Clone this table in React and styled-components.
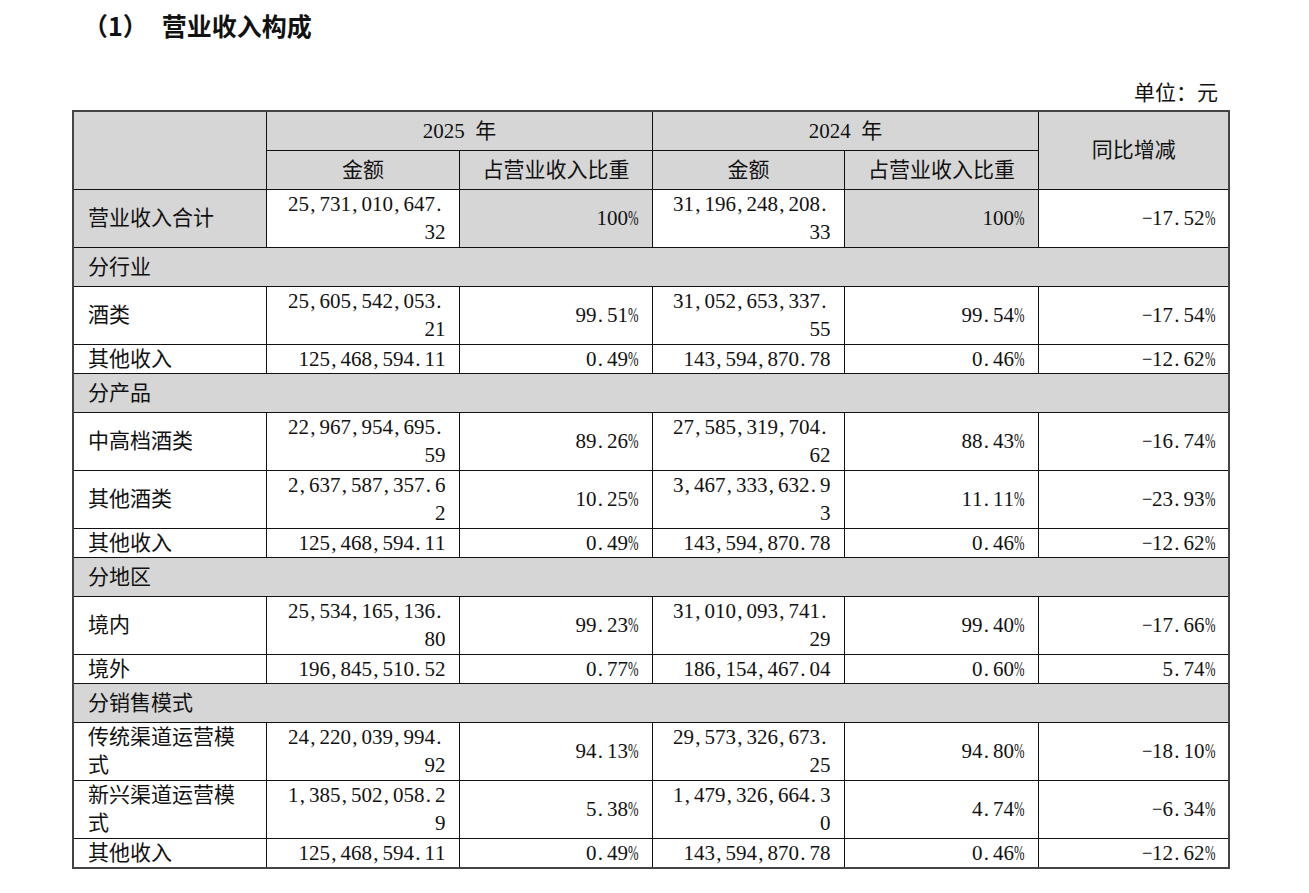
import React from "react";
import styled, { createGlobalStyle } from "styled-components";

const GlobalStyle = createGlobalStyle`
  body {
    margin: 0;
    background: #fff;
    color: #111;
    font-family: "Liberation Serif", "Noto Sans CJK SC", serif;
  }
`;

const Page = styled.div`
  width: 1156px;
  padding-left: 72px;
`;

const Title = styled.h2`
  margin: 0;
  padding-top: 8px;
  padding-left: 11px;
  display: flex;
  gap: 14px;
  font-family: "Noto Sans CJK SC", sans-serif;
  font-size: 25px;
  font-weight: 700;
  line-height: 34px;
`;

const Unit = styled.div`
  margin-top: 37px;
  padding-right: 10px;
  text-align: right;
  font-size: 21px;
  line-height: 28px;
`;

const Table = styled.table`
  margin-top: 3px;
  width: 1156px;
  table-layout: fixed;
  border-collapse: collapse;
  border: 2px solid #444;
  font-size: 21px;
  line-height: 28px;
`;

const Row = styled.tr`
  height: ${(p) => p.$h}px;
`;

const Cell = styled.td`
  padding: 0 13px 0 14px;
  border: 1px solid #111;
  vertical-align: middle;
  text-align: ${(p) => p.$align || "left"};
  background: ${(p) => (p.$gray ? "#d6d6d6" : "#fff")};
  white-space: nowrap;
`;

const Line = styled.div`
  display: block;
`;

// half-width box so latin chars take SimSun-like widths
const Ch = styled.span`
  display: inline-block;
  width: 0.5em;
  text-align: ${(p) => (p.$punct ? "left" : "center")};
  text-indent: ${(p) => (p.$punct ? "0.06em" : "0")};
  transform: ${(p) => (p.$squeeze ? `scaleX(${p.$squeeze})` : "none")};
  transform-origin: left center;
`;

const squeeze = { "%": 0.6, "−": 0.88 };

const Txt = ({ children }) => (
  <>
    {[...children].map((c, i) =>
      c.charCodeAt(0) < 128 || c === "−" ? (
        <Ch key={i} $punct={c === "," || c === "."} $squeeze={squeeze[c]}>
          {c === " " ? "\u00a0" : c}
        </Ch>
      ) : (
        c
      )
    )}
  </>
);

const Lines = ({ lines }) =>
  lines.map((l, i) => (
    <Line key={i}>
      <Txt>{l}</Txt>
    </Line>
  ));

const rows = [
  { total: true, label: ["营业收入合计"], a: ["25,731,010,647.", "32"], ap: "100%", b: ["31,196,248,208.", "33"], bp: "100%", yoy: "−17.52%" },
  { section: "分行业" },
  { label: ["酒类"], a: ["25,605,542,053.", "21"], ap: "99.51%", b: ["31,052,653,337.", "55"], bp: "99.54%", yoy: "−17.54%" },
  { label: ["其他收入"], a: ["125,468,594.11"], ap: "0.49%", b: ["143,594,870.78"], bp: "0.46%", yoy: "−12.62%" },
  { section: "分产品" },
  { label: ["中高档酒类"], a: ["22,967,954,695.", "59"], ap: "89.26%", b: ["27,585,319,704.", "62"], bp: "88.43%", yoy: "−16.74%" },
  { label: ["其他酒类"], a: ["2,637,587,357.6", "2"], ap: "10.25%", b: ["3,467,333,632.9", "3"], bp: "11.11%", yoy: "−23.93%" },
  { label: ["其他收入"], a: ["125,468,594.11"], ap: "0.49%", b: ["143,594,870.78"], bp: "0.46%", yoy: "−12.62%" },
  { section: "分地区" },
  { label: ["境内"], a: ["25,534,165,136.", "80"], ap: "99.23%", b: ["31,010,093,741.", "29"], bp: "99.40%", yoy: "−17.66%" },
  { label: ["境外"], a: ["196,845,510.52"], ap: "0.77%", b: ["186,154,467.04"], bp: "0.60%", yoy: "5.74%" },
  { section: "分销售模式" },
  { label: ["传统渠道运营模", "式"], a: ["24,220,039,994.", "92"], ap: "94.13%", b: ["29,573,326,673.", "25"], bp: "94.80%", yoy: "−18.10%" },
  { label: ["新兴渠道运营模", "式"], a: ["1,385,502,058.2", "9"], ap: "5.38%", b: ["1,479,326,664.3", "0"], bp: "4.74%", yoy: "−6.34%" },
  { label: ["其他收入"], a: ["125,468,594.11"], ap: "0.49%", b: ["143,594,870.78"], bp: "0.46%", yoy: "−12.62%" },
];

const widths = [193, 193, 193, 192, 194, 191];

export default function App() {
  return (
    <Page>
      <GlobalStyle />
      <Title>
        <span>（1）</span>
        <span>营业收入构成</span>
      </Title>
      <Unit>单位：元</Unit>
      <Table>
        <colgroup>
          {widths.map((w, i) => (
            <col key={i} style={{ width: w }} />
          ))}
        </colgroup>
        <tbody>
          <Row $h={39}>
            <Cell $gray rowSpan={2} />
            <Cell $gray colSpan={2} $align="center">
              <Txt>2025 年</Txt>
            </Cell>
            <Cell $gray colSpan={2} $align="center">
              <Txt>2024 年</Txt>
            </Cell>
            <Cell $gray rowSpan={2} $align="center">
              同比增减
            </Cell>
          </Row>
          <Row $h={39}>
            <Cell $gray $align="center">金额</Cell>
            <Cell $gray $align="center">占营业收入比重</Cell>
            <Cell $gray $align="center">金额</Cell>
            <Cell $gray $align="center">占营业收入比重</Cell>
          </Row>
          {rows.map((r, i) =>
            r.section ? (
              <Row key={i} $h={39}>
                <Cell $gray colSpan={6}>
                  {r.section}
                </Cell>
              </Row>
            ) : (
              <Row key={i} $h={r.a.length > 1 || r.label.length > 1 ? 58 : 29}>
                <Cell $gray={r.total}>
                  <Lines lines={r.label} />
                </Cell>
                <Cell $align="right">
                  <Lines lines={r.a} />
                </Cell>
                <Cell $gray={r.total} $align="right">
                  <Txt>{r.ap}</Txt>
                </Cell>
                <Cell $align="right">
                  <Lines lines={r.b} />
                </Cell>
                <Cell $gray={r.total} $align="right">
                  <Txt>{r.bp}</Txt>
                </Cell>
                <Cell $align="right">
                  <Txt>{r.yoy}</Txt>
                </Cell>
              </Row>
            )
          )}
        </tbody>
      </Table>
    </Page>
  );
}
